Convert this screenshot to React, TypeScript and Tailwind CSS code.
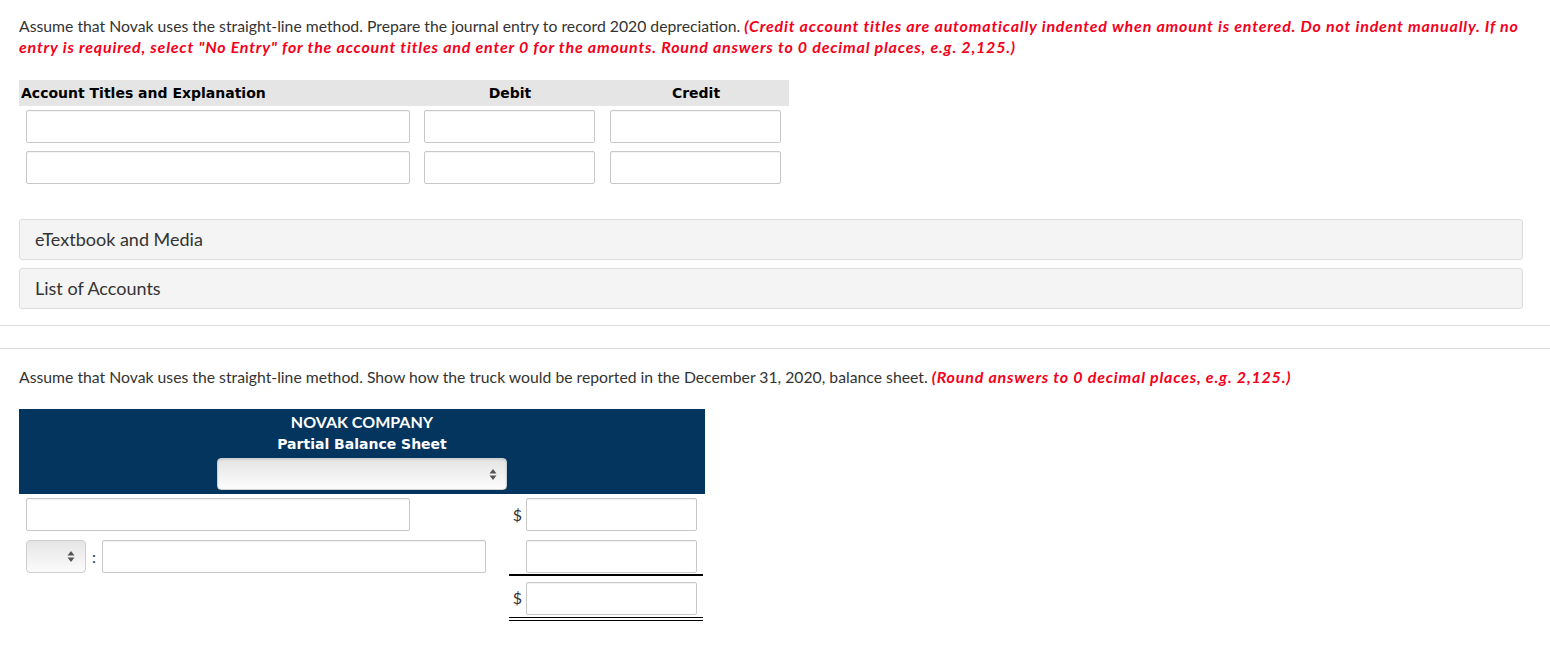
import React from "react";

const Arrows = () => (
  <svg width="8" height="13" viewBox="0 0 8 13" className="shrink-0">
    <path d="M4 1 L7.5 5.5 L0.5 5.5 Z" fill="#555" />
    <path d="M4 12 L7.5 7.5 L0.5 7.5 Z" fill="#555" />
  </svg>
);

const Input = ({ w }: { w: string }) => (
  <div className={`${w} h-[33px] border border-[#c8c8c8] rounded-[2px] bg-white shadow-[inset_0_1px_1px_rgba(0,0,0,0.05)]`} />
);

export default function App() {
  return (
    <div className="w-[1550px] min-h-[648px] bg-white text-[#333] font-['Lato','Noto_Sans',sans-serif]">
      <div className="px-[19px] pt-[15px]">
        <p className="text-[15.75px] leading-[21px]">
          Assume that Novak uses the straight-line method. Prepare the journal entry to record 2020 depreciation.{" "}
          <b className="italic font-bold text-[#f5001b] text-[16px] tracking-[0.05em]">
            (Credit account titles are automatically indented when amount is entered. Do not indent manually. If no
            entry is required, select "No Entry" for the account titles and enter 0 for the amounts. Round answers to 0
            decimal places, e.g. 2,125.)
          </b>
        </p>

        <div className="mt-[23px] w-[770px]">
          <div className="flex h-[26px] items-center bg-[#e5e5e5] font-['DejaVu_Sans',sans-serif] font-bold text-[14px] text-black">
            <div className="w-[398px] pl-[2px]">Account Titles and Explanation</div>
            <div className="w-[186px] text-center">Debit</div>
            <div className="w-[186px] text-center">Credit</div>
          </div>
          {[0, 1].map((i) => (
            <div key={i} className={`flex ${i === 0 ? "mt-[4px]" : "mt-[8px]"}`}>
              <div className="w-[398px] pl-[7px]">
                <Input w="w-[384px]" />
              </div>
              <div className="w-[186px] pl-[7px]">
                <Input w="w-[171px]" />
              </div>
              <div className="w-[186px] pl-[7px]">
                <Input w="w-[171px]" />
              </div>
            </div>
          ))}
        </div>

        <div className="mt-[35px] flex flex-col gap-[8px] w-[1504px]">
          <div className="h-[41px] flex items-center pl-[15px] bg-[#f4f4f4] border border-[#dcdcdc] rounded-[3px] text-[18px] text-[#333]">
            eTextbook and Media
          </div>
          <div className="h-[41px] flex items-center pl-[15px] bg-[#f4f4f4] border border-[#dcdcdc] rounded-[3px] text-[18px] text-[#333]">
            List of Accounts
          </div>
        </div>
      </div>

      <div className="mt-[16px] h-px bg-[#dcdcdc]" />
      <div className="mt-[22px] h-px bg-[#dcdcdc]" />

      <div className="px-[19px]">
        <p className="mt-[17px] text-[15.75px] leading-[21px]">
          Assume that Novak uses the straight-line method. Show how the truck would be reported in the December 31,
          2020, balance sheet.{" "}
          <b className="italic font-bold text-[#f5001b] text-[16px] tracking-[0.05em]">(Round answers to 0 decimal places, e.g. 2,125.)</b>
        </p>

        <div className="mt-[22px] w-[686px]">
          <div className="bg-[#03355f] h-[85px] flex flex-col items-center pt-[2px] text-white">
            <div className="h-[22px] leading-[22px] text-[16px] font-bold">
              NOVAK COMPANY
            </div>
            <div className="h-[22px] leading-[22px] text-[14px] font-bold font-['DejaVu_Sans',sans-serif]">
              Partial Balance Sheet
            </div>
            <div className="mt-[3px] w-[290px] h-[32px] rounded-[4px] bg-gradient-to-b from-[#e4e4e4] to-[#fdfdfd] border border-[#cfcfcf] flex items-center justify-end pr-[9px] shadow-[inset_0_1px_2px_rgba(0,0,0,0.1)]">
              <Arrows />
            </div>
          </div>

          <div className="flex items-center mt-[4px]">
            <div className="w-[490px] pl-[7px]">
              <Input w="w-[384px]" />
            </div>
            <div className="w-[194px] flex items-center">
              <span className="w-[17px] text-center text-[16px] text-[#333]">$</span>
              <Input w="ml-auto mr-[6px] w-[171px]" />
            </div>
          </div>

          <div className="flex items-center mt-[9px]">
            <div className="w-[490px] pl-[7px] flex items-center">
              <div className="w-[60px] h-[33px] rounded-[4px] bg-gradient-to-b from-[#e6e6e6] to-[#fbfbfb] border border-[#cfcfcf] flex items-center justify-end pr-[10px]">
                <Arrows />
              </div>
              <span className="w-[16px] text-center text-[16px] text-[#333]">:</span>
              <Input w="w-[384px]" />
            </div>
            <div className="w-[194px] flex flex-col">
              <div className="flex items-center">
                <span className="w-[17px]" />
                <Input w="ml-auto mr-[6px] w-[171px]" />
              </div>
            </div>
          </div>
          <div className="ml-[490px] w-[194px] h-[1.5px] bg-black mt-[1px]" />

          <div className="flex items-center mt-[6px]">
            <div className="w-[490px]" />
            <div className="w-[194px] flex items-center">
              <span className="w-[17px] text-center text-[16px] text-[#333]">$</span>
              <Input w="ml-auto mr-[6px] w-[171px]" />
            </div>
          </div>
          <div className="ml-[490px] w-[194px] mt-[2px] h-[4px] border-t-[1.5px] border-b-[1.5px] border-black" />
        </div>
      </div>
    </div>
  );
}
